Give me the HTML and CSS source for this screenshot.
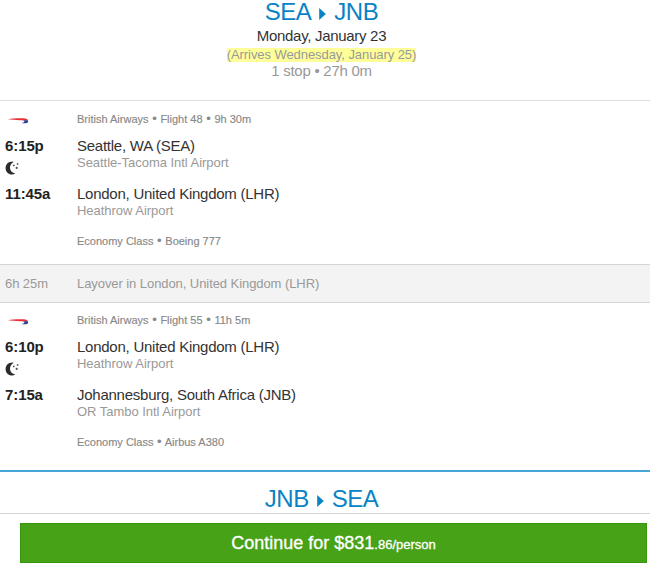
FILE: index.html
```html
<!DOCTYPE html>
<html lang="en">
<head>
  <meta charset="UTF-8" />
  <meta name="viewport" content="width=device-width, initial-scale=1" />
  <title>Flight Details – SEA to JNB</title>
  <link rel="stylesheet" href="styles.css">
</head>
<body>
  <!-- Shared icons -->
  <svg class="sprite" aria-hidden="true">
    <symbol id="airline" viewBox="0 0 21 8">
      <path d="M0 2.200 C5 1.200 13 .8 17.500 1.600 C19.500 2 20.200 2.800 20 4 C18 3.200 15 3.300 12 3.200 C8 3 3 2.600 0 2.200Z" fill="#ea2f3a"/>
      <path d="M15 3.600 C17 3 19.800 3.100 20.200 4.200 C20.400 6 17.500 6.800 13.500 6 C16.500 5.700 17.500 4.800 15 3.600Z" fill="#2a4096"/>
    </symbol>
    <symbol id="night" viewBox="0 0 14 14">
      <path d="M7.600 .4 C3.400 .4 .6 3.200 .6 6.900 C.6 10.800 3.400 13.500 7 13.500 C8.300 13.500 9.300 13.100 10.200 12.300 C7 11.900 5 9.900 5 6.800 C5 4.200 6.200 2 8.600 .9Z" fill="#2b2b2b"/>
      <circle cx="8.800" cy="4.400" r=".9" fill="#555"/>
      <circle cx="12.600" cy="2.900" r=".9" fill="#555"/>
      <circle cx="11.700" cy="6.900" r="1.100" fill="#555"/>
    </symbol>
    <symbol id="arrow" viewBox="0 0 7 12">
      <path d="M.2 0 L6.800 6 L.2 12Z" fill="#0a83c6"/>
    </symbol>
  </svg>

  <!-- Outbound -->
  <header class="trip-header">
    <h1 class="route"><span>SEA</span><svg class="arrow"><use href="#arrow"/></svg><span>JNB</span></h1>
    <p class="date">Monday, January 23</p>
    <p class="arrives"><span>(Arrives Wednesday, January 25)</span></p>
    <p class="summary">1 stop • 27h 0m</p>
  </header>

  <section class="segment">
    <div class="row flight">
      <svg class="airline"><use href="#airline"/></svg>
      <p class="meta">British Airways <b>•</b> Flight 48 <b>•</b> 9h 30m</p>
    </div>
    <div class="row stop">
      <div class="time">6:15p<svg class="night"><use href="#night"/></svg></div>
      <div>
        <p class="city">Seattle, WA (SEA)</p>
        <p class="airport">Seattle-Tacoma Intl Airport</p>
      </div>
    </div>
    <div class="row stop">
      <div class="time">11:45a</div>
      <div>
        <p class="city">London, United Kingdom (LHR)</p>
        <p class="airport">Heathrow Airport</p>
      </div>
    </div>
    <p class="meta cabin">Economy Class <b>•</b> Boeing 777</p>
  </section>

  <div class="row layover">
    <span>6h 25m</span>
    <span>Layover in London, United Kingdom (LHR)</span>
  </div>

  <section class="segment connecting">
    <div class="row flight">
      <svg class="airline"><use href="#airline"/></svg>
      <p class="meta">British Airways <b>•</b> Flight 55 <b>•</b> 11h 5m</p>
    </div>
    <div class="row stop">
      <div class="time">6:10p<svg class="night"><use href="#night"/></svg></div>
      <div>
        <p class="city">London, United Kingdom (LHR)</p>
        <p class="airport">Heathrow Airport</p>
      </div>
    </div>
    <div class="row stop">
      <div class="time">7:15a</div>
      <div>
        <p class="city">Johannesburg, South Africa (JNB)</p>
        <p class="airport">OR Tambo Intl Airport</p>
      </div>
    </div>
    <p class="meta cabin">Economy Class <b>•</b> Airbus A380</p>
  </section>

  <!-- Return -->
  <header class="trip-header return">
    <h1 class="route"><span>JNB</span><svg class="arrow"><use href="#arrow"/></svg><span>SEA</span></h1>
  </header>

  <footer class="action-bar">
    <button class="continue">Continue for $831<small>.86/person</small></button>
  </footer>
</body>
</html>
```
FILE: styles.css
```css
* { box-sizing: border-box; }

body {
  margin: 0;
  height: 567px;
  background: #fff;
  color: #333;
  font-family: "Liberation Sans", Arial, sans-serif;
}
h1, p { margin: 0; font-weight: 400; }
.sprite { display: none; }

/* Trip header */
.trip-header {
  height: 101px;
  padding-right: 7px;
  border-bottom: 1px solid #ddd;
  text-align: center;
}
.route {
  display: flex;
  justify-content: center;
  align-items: center;
  height: 24px;
  color: #0a83c6;
  font-size: 24px;
  line-height: 24px;
  letter-spacing: -0.5px;
}
.arrow { width: 7px; height: 12px; margin: 3px 8px 0 8px; }
.date { font-size: 15px; line-height: 24px; letter-spacing: -0.3px; }
.arrives {
  height: 14px;
  color: #999;
  font-size: 13px;
  line-height: 14px;
  letter-spacing: -0.07px;
}
.arrives span { display: inline-block; background: #ffff99; }
.summary { color: #999; font-size: 15px; line-height: 18px; letter-spacing: -0.25px; }

/* Flight segment */
.segment { height: 163px; padding: 10px 5px 0; }
.connecting { padding-top: 9px; }
.row { display: grid; grid-template-columns: 72px 1fr; }
.flight { height: 26px; }
.airline { width: 21px; height: 8px; margin: 6px 0 0 3px; }
.meta { color: #888; font-size: 11px; line-height: 16px; -webkit-text-stroke: 0.15px #888; }
.meta b { margin: 0 0.6px; font-size: 13px; font-weight: 400; line-height: 1; }
.stop { height: 48px; }
.time {
  display: flex;
  flex-direction: column;
  color: #222;
  font-size: 15px;
  font-weight: 700;
  line-height: 18px;
  letter-spacing: -0.1px;
}
.night { width: 14px; height: 14px; margin-top: 6px; }
.city { font-size: 15px; line-height: 18px; letter-spacing: -0.25px; }
.airport { color: #999; font-size: 13px; line-height: 16px; letter-spacing: -0.03px; }
.cabin { padding-left: 72px; }

/* Layover */
.layover {
  height: 39px;
  padding: 0 5px;
  border-top: 1px solid #d5d5d5;
  border-bottom: 1px solid #d5d5d5;
  background: #f3f3f3;
  color: #999;
  font-size: 13px;
  line-height: 37px;
  letter-spacing: -0.07px;
}

/* Return trip + sticky action */
.return {
  height: 44px;
  padding-top: 15px;
  margin-top: 4px;
  border-top: 2px solid #48a5d7;
  border-bottom: 1px solid #d5d5d5;
}
.action-bar { padding: 9px 3px 0 20px; }
.continue {
  display: block;
  width: 100%;
  height: 40px;
  padding: 0;
  border: 1px solid #37960f;
  background: #47a218;
  color: #fff;
  font-family: inherit;
  font-size: 18px;
  -webkit-text-stroke: 0.3px #fff;
}
.continue small { font-size: 13px; }
```
